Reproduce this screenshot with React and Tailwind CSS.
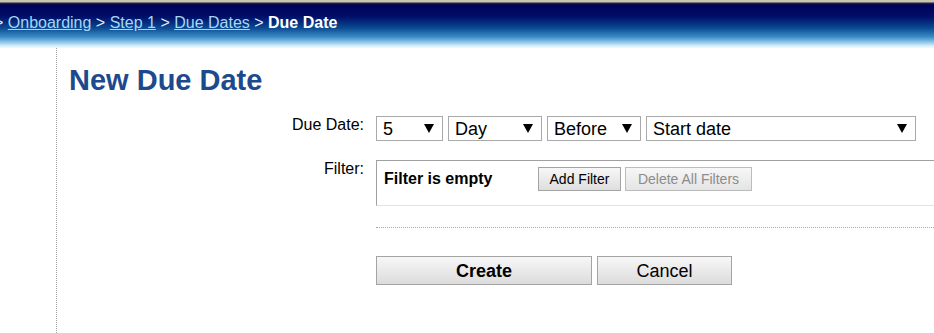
import React from "react"

const Arrow = () => (
  <svg width="10" height="9" viewBox="0 0 10 9" className="shrink-0">
    <path d="M0 0 L10 0 L5 9 Z" fill="#000" />
  </svg>
)

function FakeSelect({ value, width }) {
  return (
    <div
      className={`${width} h-[25px] border border-[#a9a9a9] bg-white flex items-center justify-between pl-[6px] pr-[8px] text-[18px] leading-none text-black`}
    >
      <span>{value}</span>
      <Arrow />
    </div>
  )
}

export default function App() {
  return (
    <div className="w-[934px] h-[333px] overflow-hidden bg-white font-['Liberation_Sans',Arial,sans-serif] text-black">
      {/* HEADER / BREADCRUMB */}
      <div className="h-[48px] bg-[linear-gradient(to_bottom,#c9c5b2_0px,#c9c5b2_2px,#252538_3px,#000058_5px,#00106a_17px,#0a4a92_28px,#3a8cc6_37px,#9ed0ee_43px,#d8f0fb_46px,#f4fbfe_48px)] flex items-start pt-[13px]">
        <div className="ml-[-6px] text-[16px] leading-[20px] whitespace-nowrap text-[#e6eef6]">
          &gt; <span className="text-[#a6d6f6] underline">Onboarding</span> &gt;{" "}
          <span className="text-[#a6d6f6] underline">Step 1</span> &gt;{" "}
          <span className="text-[#a6d6f6] underline">Due Dates</span> &gt;{" "}
          <span className="font-bold text-white">Due Date</span>
        </div>
      </div>

      <div className="flex">
        {/* LEFT RAIL */}
        <div className="w-[57px] h-[285px] shrink-0 border-r border-dotted border-[#a0a0a0]" />

        {/* CONTENT */}
        <div className="pl-[12px]">
          <h1 className="mt-[16px] text-[29px] leading-[32px] font-bold text-[#1d4a8c]">
            New Due Date
          </h1>

          <div className="mt-[20px] flex flex-col">
            {/* DUE DATE ROW */}
            <div className="flex">
              <div className="w-[295px] text-right text-[16px] leading-[20px] -mt-[1px]">Due Date:</div>
              <div className="pl-[12px] flex gap-[5px]">
                <FakeSelect value="5" width="w-[67px]" />
                <FakeSelect value="Day" width="w-[94px]" />
                <FakeSelect value="Before" width="w-[94px]" />
                <FakeSelect value="Start date" width="w-[270px]" />
              </div>
            </div>

            {/* FILTER ROW */}
            <div className="flex mt-[19px]">
              <div className="w-[295px] text-right text-[16px] leading-[20px] -mt-[1px]">Filter:</div>
              <div className="pl-[12px]">
                <div className="w-[620px] h-[46px] border-t border-l border-[#a0a0a0] border-b border-b-[#e2e2e2] flex items-start pt-[6px] pl-[7px]">
                  <div className="w-[154px] h-[24px] flex items-center text-[16px] font-bold">
                    Filter is empty
                  </div>
                  <button className="w-[83px] h-[24px] border border-[#a4a4a4] bg-[linear-gradient(to_bottom,#f7f7f7,#dedede)] text-[14px] leading-none">
                    Add Filter
                  </button>
                  <button className="ml-[4px] w-[127px] h-[24px] border border-[#bcbcbc] bg-[linear-gradient(to_bottom,#f7f7f7,#e4e4e4)] text-[14px] leading-none text-[#8c8c8c]">
                    Delete All Filters
                  </button>
                </div>

                <div className="mt-[21px] w-[620px] border-t border-dotted border-[#a8a8a8]" />

                {/* ACTIONS */}
                <div className="mt-[28px] flex gap-[5px]">
                  <button className="w-[216px] h-[29px] border border-[#a4a4a4] bg-[linear-gradient(to_bottom,#f7f7f7,#dcdcdc)] text-[18px] font-bold leading-none">
                    Create
                  </button>
                  <button className="w-[135px] h-[29px] border border-[#a4a4a4] bg-[linear-gradient(to_bottom,#f7f7f7,#dcdcdc)] text-[18px] leading-none">
                    Cancel
                  </button>
                </div>
              </div>
            </div>
          </div>
        </div>
      </div>
    </div>
  )
}
